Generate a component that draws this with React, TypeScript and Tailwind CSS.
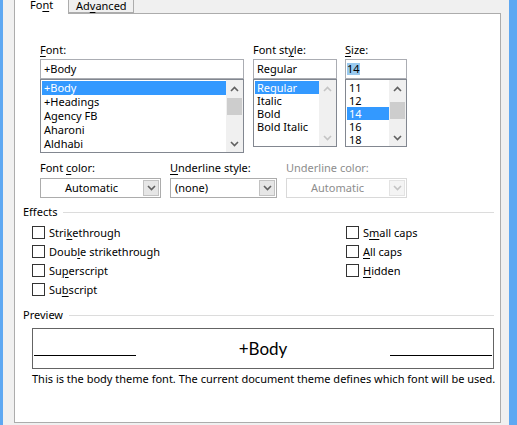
import React from "react";

const ui = "font-['Noto_Sans',sans-serif] text-[11px] text-black";

function Chevron({ dir, color = "#606060" }: { dir: "up" | "down"; color?: string }) {
  return (
    <svg width="9" height="6" viewBox="0 0 9 6" aria-hidden>
      <path
        d={dir === "up" ? "M1 5L4.5 1.5L8 5" : "M1 1L4.5 4.5L8 1"}
        fill="none"
        stroke={color}
        strokeWidth="1.6"
      />
    </svg>
  );
}

function Scrollbar({ thumb, disabled }: { thumb?: [number, number]; disabled?: boolean }) {
  const c = disabled ? "#c4c4c4" : "#606060";
  return (
    <div className="relative flex w-[17px] flex-none flex-col justify-between bg-[#f0f0f0]">
      <div className="flex h-[17px] items-center justify-center">
        <Chevron dir="up" color={c} />
      </div>
      {thumb && (
        <div
          className="absolute left-px right-px bg-[#cdcdcd]"
          style={{ top: thumb[0], height: thumb[1] }}
        />
      )}
      <div className="flex h-[17px] items-center justify-center">
        <Chevron dir="down" color={c} />
      </div>
    </div>
  );
}

function ListBox({
  items,
  selected,
  rowH,
  width,
  height,
  thumb,
  disabled,
}: {
  items: string[];
  selected: number;
  rowH: number;
  width: number;
  height: number;
  thumb?: [number, number];
  disabled?: boolean;
}) {
  return (
    <div
      className="flex border border-[#828790] bg-white"
      style={{ width, height }}
    >
      <div className="flex-1 overflow-hidden pl-px pt-px">
        {items.map((t, i) => (
          <div
            key={t}
            className={`pl-[2px] ${i === selected ? "bg-[#3399ff] text-white" : ""}`}
            style={{ height: rowH, lineHeight: `${rowH}px` }}
          >
            {t}
          </div>
        ))}
      </div>
      <Scrollbar thumb={thumb} disabled={disabled} />
    </div>
  );
}

function U({ children }: { children: React.ReactNode }) {
  return <span className="underline underline-offset-[2px]">{children}</span>;
}

function Dropdown({
  value,
  width,
  center,
  disabled,
}: {
  value: string;
  width: number;
  center?: boolean;
  disabled?: boolean;
}) {
  return (
    <div
      className={`flex h-[20px] border bg-white ${disabled ? "border-[#d9d9d9] text-[#8d8d8d]" : "border-[#acacac]"}`}
      style={{ width }}
    >
      <div className={`flex-1 leading-[18px] ${center ? "text-center" : "pl-[4px]"}`}>{value}</div>
      <div
        className={`m-px flex w-[16px] items-center justify-center border ${disabled ? "border-[#e3e3e3] bg-[#f4f4f4]" : "border-[#c2c2c2] bg-[#e6e6e6]"}`}
      >
        <Chevron dir="down" color={disabled ? "#c4c4c4" : "#606060"} />
      </div>
    </div>
  );
}

function Check({ label }: { label: React.ReactNode }) {
  return (
    <div className="flex h-[19px] items-center">
      <div className="h-[13px] w-[13px] border border-[#333] bg-white" />
      <span className="ml-[4px] leading-[14px]">{label}</span>
    </div>
  );
}

function SectionLabel({ children }: { children: React.ReactNode }) {
  return (
    <div className="flex h-[14px] items-center">
      <span className="leading-[14px]">{children}</span>
      <div className="ml-[6px] mr-[6px] h-px flex-1 bg-[#dcdcdc]" />
    </div>
  );
}

export default function App() {
  return (
    <div className={`flex h-[425px] w-[517px] overflow-hidden bg-[#f0f0f0] ${ui}`}>
      <div className="w-[3px] flex-none bg-[#5ea8f2]" />
      <div className="ml-[11px] flex w-[487px] flex-none flex-col">
        <div className="flex h-[13px] items-end">
          <div className="relative z-10 -mb-px h-[14px] w-[55px] border-l border-r border-[#acacac] bg-white pl-[15px] leading-[10px]">
            Fo<U>n</U>t
          </div>
          <div className="h-[13px] w-[65px] border-b border-r border-[#acacac] bg-[#f0f0f0] pl-[7px] leading-[11px]">
            Ad<U>v</U>anced
          </div>
        </div>
        <div className="h-[410px] border border-[#acacac] bg-white pl-[8px] pt-[29px]">
          {/* font / style / size */}
          <div className="ml-[17px] flex">
            <div className="w-[204px]">
              <div className="mb-[2px] h-[14px] leading-[14px]">
                <U>F</U>ont:
              </div>
              <div className="h-[20px] border border-[#abadb3] pl-[3px] leading-[18px]">+Body</div>
              <ListBox
                items={["+Body", "+Headings", "Agency FB", "Aharoni", "Aldhabi"]}
                selected={0}
                rowH={14}
                width={204}
                height={74}
                thumb={[18, 17]}
              />
            </div>
            <div className="ml-[9px] w-[84px]">
              <div className="mb-[2px] h-[14px] leading-[14px]">
                Font st<U>y</U>le:
              </div>
              <div className="h-[20px] border border-[#abadb3] pl-[3px] leading-[18px]">Regular</div>
              <ListBox
                items={["Regular", "Italic", "Bold", "Bold Italic"]}
                selected={0}
                rowH={13}
                width={84}
                height={68}
                disabled
              />
            </div>
            <div className="ml-[8px] w-[62px]">
              <div className="mb-[2px] h-[14px] leading-[14px]">
                <U>S</U>ize:
              </div>
              <div className="h-[20px] border border-[#abadb3] pl-[1px] pt-[3px]">
                <span className="block h-[12px] w-[13px] bg-[#99c9ef] leading-[12px]">14</span>
              </div>
              <ListBox
                items={["11", "12", "14", "16", "18"]}
                selected={2}
                rowH={13}
                width={62}
                height={68}
                thumb={[22, 17]}
              />
            </div>
          </div>

          {/* colour / underline */}
          <div className="ml-[17px] mt-[8px] flex">
            <div>
              <div className="mb-[3px] h-[14px] leading-[14px]">
                Font <U>c</U>olor:
              </div>
              <Dropdown value="Automatic" width={121} center />
            </div>
            <div className="ml-[9px]">
              <div className="mb-[3px] h-[14px] leading-[14px]">
                <U>U</U>nderline style:
              </div>
              <Dropdown value="(none)" width={107} />
            </div>
            <div className="ml-[9px]">
              <div className="mb-[3px] h-[14px] leading-[14px] text-[#8d8d8d]">Underline color:</div>
              <Dropdown value="Automatic" width={121} center disabled />
            </div>
          </div>

          {/* effects */}
          <div className="mt-[7px]">
            <SectionLabel>Effects</SectionLabel>
          </div>
          <div className="ml-[9px] mt-[4px] flex">
            <div className="w-[314px]">
              <Check label={<>Stri<U>k</U>ethrough</>} />
              <Check label={<>Doub<U>l</U>e strikethrough</>} />
              <Check label={<>Su<U>p</U>erscript</>} />
              <Check label={<>Su<U>b</U>script</>} />
            </div>
            <div>
              <Check label={<>S<U>m</U>all caps</>} />
              <Check label={<><U>A</U>ll caps</>} />
              <Check label={<><U>H</U>idden</>} />
            </div>
          </div>

          {/* preview */}
          <div className="mt-[9px]">
            <SectionLabel>Preview</SectionLabel>
          </div>
          <div className="ml-[9px] mt-[6px] flex h-[41px] w-[462px] items-center border border-[#646464] px-px">
            <div className="mt-[13px] h-px w-[102px] bg-black" />
            <div className="flex-1 text-center font-['Lato',sans-serif] text-[17px] leading-[20px]">+Body</div>
            <div className="mt-[13px] h-px w-[102px] bg-black" />
          </div>
          <div className="ml-[9px] mt-[3px] whitespace-nowrap leading-[14px]">
            This is the body theme font. The current document theme defines which font will be used.
          </div>
        </div>
      </div>
      <div className="ml-[8px] w-[8px] flex-none bg-[#5ea8f2]" />
    </div>
  );
}
